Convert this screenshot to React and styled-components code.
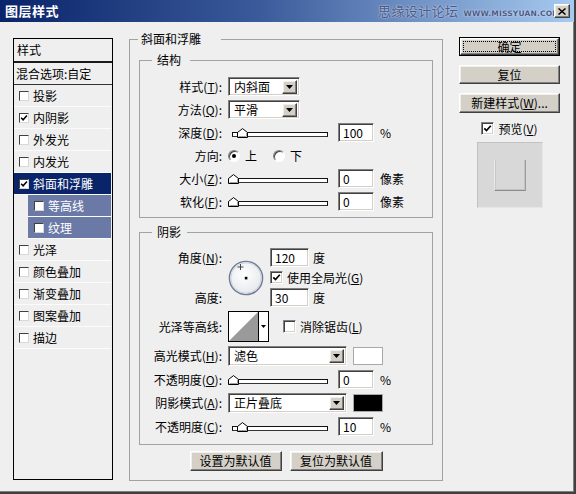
import React from 'react';
import styled, { createGlobalStyle } from 'styled-components';

const GlobalStyle = createGlobalStyle`
  html, body {
    margin: 0;
    padding: 0;
    background: #efefef;
  }
  body {
    font-family: "Noto Sans CJK SC", "Noto Sans", sans-serif;
    font-size: 12px;
    color: #000;
  }
  u {
    text-decoration: underline;
    text-underline-offset: 1px;
  }
`;

const sunken = `
  border: 1px solid;
  border-color: #808080 #ffffff #ffffff #808080;
  box-shadow: inset 1px 1px #404040, inset -1px -1px #d4d0c8;
`;

const raised = `
  border: 1px solid;
  border-color: #ffffff #404040 #404040 #ffffff;
  box-shadow: inset -1px -1px #808080, inset 1px 1px #f1efe8;
`;

const Window = styled.div`
  position: relative;
  width: 576px;
  height: 494px;
  box-sizing: border-box;
  background: #efefef;
  display: flex;
  flex-direction: column;
  overflow: hidden;
  border-right: 2px solid #404040;
  border-bottom: 2px solid #404040;
  box-shadow: inset -1px -1px #808080;
  line-height: 14px;
`;

const TitleBar = styled.div`
  position: relative;
  height: 22px;
  flex-shrink: 0;
  display: flex;
  align-items: center;
  padding: 0 4px 0 5px;
  background: linear-gradient(to right, #0a246a 0%, #3a5a9a 45%, #a6caf0 100%);
`;

const Title = styled.span`
  color: #fff;
  font-weight: bold;
  font-size: 13px;
  letter-spacing: 0.5px;
`;

const Watermark = styled.div`
  position: absolute;
  right: 14px;
  top: 4px;
  display: flex;
  align-items: baseline;
  gap: 5px;
  color: #4c5a86;
  text-shadow: 0 0 2px #e8eef8;
  pointer-events: none;
`;

const WatermarkCn = styled.span`
  font-size: 13px;
  letter-spacing: 0.4px;
`;

const WatermarkEn = styled.span`
  font-family: "DejaVu Sans", sans-serif;
  font-size: 7.5px;
  font-weight: bold;
  letter-spacing: 0.2px;
`;

const CloseButton = styled.div`
  margin-left: auto;
  width: 16px;
  height: 14px;
  box-sizing: border-box;
  background: #d4d0c8;
  ${raised}
  display: flex;
  align-items: center;
  justify-content: center;
  position: relative;
  z-index: 1;
`;

const Body = styled.div`
  display: flex;
  align-items: flex-start;
  padding: 15px 0 0 13px;
`;

/* ---------- left style list ---------- */

const StyleList = styled.div`
  width: 100px;
  height: 442px;
  margin-top: 1px;
  box-sizing: border-box;
  border: 1px solid #000;
  display: flex;
  flex-direction: column;
  flex-shrink: 0;
`;

const ListHeader = styled.div`
  height: 22px;
  border-bottom: 2px solid #1a1a1a;
  padding-left: 3px;
  display: flex;
  align-items: center;
`;

const ListBlend = styled.div`
  height: 21px;
  border-bottom: 1px solid #333;
  padding-left: 2px;
  display: flex;
  align-items: center;
  white-space: nowrap;
`;

const ListItem = styled.div`
  height: 21px;
  border-bottom: 1px solid #fbfbfb;
  display: flex;
  align-items: center;
  gap: 4px;
  white-space: nowrap;
  margin: ${p => (p.$sub ? '0 1px 0 14px' : '0 1px 0 0')};
  padding-left: ${p => (p.$sub ? '6px' : '5px')};
  background: ${p => (p.$active ? '#0a246a' : p.$sub ? '#6b79a6' : 'transparent')};
  color: ${p => (p.$active || p.$sub ? '#fff' : '#000')};
`;

const ListBox = styled.span`
  width: 10px;
  height: 10px;
  box-sizing: border-box;
  flex-shrink: 0;
  background: #fff;
  border: 1px solid;
  border-color: #404040 #d8d8d8 #d8d8d8 #404040;
  display: flex;
  align-items: center;
  justify-content: center;
`;

/* ---------- middle panel ---------- */

const Group = styled.fieldset`
  margin: ${p => p.$margin || '0'};
  padding: ${p => p.$pad || '0'};
  min-width: 0;
  box-sizing: border-box;
  border: 1px solid #a2a2a2;
  width: ${p => p.$width || 'auto'};
  flex-shrink: 0;
`;

const Legend = styled.legend`
  margin-left: ${p => p.$offset}px;
  padding: 0 ${p => p.$right}px 0 ${p => p.$left}px;
  height: 14px;
  line-height: 14px;
  font-size: 12px;
`;

const Row = styled.div`
  display: flex;
  align-items: center;
  height: ${p => p.$h || 19}px;
  margin-top: ${p => p.$mt ?? 4}px;
  white-space: nowrap;
`;

const Label = styled.span`
  width: 82px;
  margin-right: 6px;
  flex-shrink: 0;
  text-align: right;
  white-space: nowrap;
`;

const SelectBox = styled.div`
  width: ${p => p.$w}px;
  height: ${p => p.$h || 19}px;
  box-sizing: border-box;
  background: #fff;
  ${sunken}
  display: flex;
  align-items: center;
  justify-content: space-between;
  padding: 0 2px 0 5px;
  flex-shrink: 0;
`;

const DropButton = styled.span`
  width: 15px;
  height: 14px;
  box-sizing: border-box;
  background: #d4d0c8;
  ${raised}
  display: flex;
  align-items: center;
  justify-content: center;
`;

const NumberBox = styled.div`
  width: ${p => p.$w || 36}px;
  height: 19px;
  box-sizing: border-box;
  margin-left: ${p => p.$ml ?? 0}px;
  background: #fff;
  ${sunken}
  display: flex;
  align-items: center;
  padding-left: 4px;
  flex-shrink: 0;
`;

const Unit = styled.span`
  margin-left: ${p => p.$ml ?? 6}px;
`;

const SliderWrap = styled.div`
  position: relative;
  width: 100px;
  height: 19px;
  flex-shrink: 0;
  display: flex;
  align-items: center;
`;

const Track = styled.div`
  width: 96px;
  height: 5px;
  margin: 3px 0 0 4px;
  box-sizing: border-box;
  border: 1px solid #111;
  border-bottom-color: #333;
  background: #fff;
`;

const Thumb = styled.svg`
  position: absolute;
  top: 5px;
`;

const Radio = styled.span`
  position: relative;
  width: 12px;
  height: 12px;
  box-sizing: border-box;
  border-radius: 50%;
  background: #fff;
  border: 1px solid;
  border-color: #808080 #ffffff #ffffff #808080;
  box-shadow: inset 1px 1px #404040;
  flex-shrink: 0;
  &::after {
    content: '';
    display: ${p => (p.$checked ? 'block' : 'none')};
    position: absolute;
    left: 3px;
    top: 3px;
    width: 4px;
    height: 4px;
    border-radius: 50%;
    background: #000;
  }
`;

const RadioText = styled.span`
  margin: 0 ${p => p.$mr || 0}px 0 5px;
`;

const CheckBox = styled.span`
  width: 13px;
  height: 13px;
  box-sizing: border-box;
  background: #fff;
  ${sunken}
  display: flex;
  align-items: center;
  justify-content: center;
  flex-shrink: 0;
  margin-left: ${p => p.$ml || 0}px;
`;

const CheckText = styled.span`
  margin-left: 4px;
`;

const AngleGrid = styled.div`
  display: grid;
  grid-template-columns: 88px 42px auto;
  grid-template-rows: 19px 19px 19px;
  row-gap: 1px;
  align-items: center;
  margin-top: 9px;
`;

const GridLabel = styled.span`
  grid-column: 1;
  grid-row: ${p => p.$row};
  text-align: right;
  padding-right: 6px;
  white-space: nowrap;
`;

const Dial = styled.div`
  grid-column: 2;
  grid-row: 1 / 4;
  display: flex;
  align-items: center;
`;

const GridCell = styled.div`
  grid-column: 3;
  grid-row: ${p => p.$row};
  display: flex;
  align-items: center;
  white-space: nowrap;
`;

const Contour = styled.div`
  width: 41px;
  height: 31px;
  box-sizing: border-box;
  border: 1px solid #000;
  background: #fff;
  display: flex;
  flex-shrink: 0;
`;

const ContourArrow = styled.span`
  flex: 1;
  border-left: 1px solid #000;
  display: flex;
  align-items: center;
  justify-content: center;
`;

const Swatch = styled.span`
  width: 30px;
  height: 18px;
  box-sizing: border-box;
  margin-left: 6px;
  border: 1px solid #a8a8a8;
  background: ${p => p.$color};
  flex-shrink: 0;
`;

const ButtonRow = styled.div`
  display: flex;
  justify-content: center;
  gap: 8px;
  margin-top: 6px;
`;

const Button = styled.div`
  width: ${p => p.$w || 101}px;
  height: ${p => p.$h || 19}px;
  box-sizing: border-box;
  background: #d4d0c8;
  ${raised}
  display: flex;
  align-items: center;
  justify-content: center;
  white-space: nowrap;
  margin-top: ${p => p.$mt || 0}px;
`;

const DefaultButton = styled.div`
  width: 101px;
  height: 19px;
  box-sizing: border-box;
  border: 1px solid #000;
  display: flex;
`;

const DefaultInner = styled.div`
  flex: 1;
  background: #d4d0c8;
  ${raised}
  display: flex;
  align-items: center;
  justify-content: center;
  padding: 2px;
`;

const Focus = styled.div`
  flex: 1;
  align-self: stretch;
  border: 1px dotted #000;
  display: flex;
  align-items: center;
  justify-content: center;
`;

/* ---------- right column ---------- */

const RightColumn = styled.div`
  width: 101px;
  margin-left: 16px;
  display: flex;
  flex-direction: column;
  align-items: center;
  flex-shrink: 0;
`;

const PreviewToggle = styled.div`
  display: flex;
  align-items: center;
  margin-top: 8px;
  height: 15px;
`;

const PreviewBox = styled.div`
  width: 66px;
  height: 66px;
  margin-top: 6px;
  box-sizing: border-box;
  background: #d8d8d8;
  border: 1px solid;
  border-color: #c2c2c2 #e6e6e6 #e6e6e6 #c2c2c2;
  display: flex;
  justify-content: center;
  padding-top: 17px;
`;

const PreviewSquare = styled.div`
  width: 32px;
  height: 31px;
  box-sizing: border-box;
  border-left: 1px solid #e9e9e9;
  border-right: 1px solid #9c9c9c;
  border-bottom: 1px solid #8c8c8c;
  box-shadow: inset 1px 0 #c8c8c8, inset -1px -1px #c4c4c4;
`;

/* ---------- small drawings ---------- */

const Tick = ({ size = 13 }) => (
  <svg width={size - 4} height={size - 4} viewBox="0 0 9 9">
    <path d="M1.3 4.3 L3.5 6.6 L7.8 1.8" fill="none" stroke="#000" strokeWidth="1.7" />
  </svg>
);

const DownTriangle = ({ w = 7, h = 4 }) => (
  <svg width={w} height={h} viewBox={`0 0 ${w} ${h}`}>
    <path d={`M0 0 H${w} L${w / 2} ${h} Z`} fill="#000" />
  </svg>
);

const Select = ({ w, h, children }) => (
  <SelectBox $w={w} $h={h}>
    <span>{children}</span>
    <DropButton>
      <DownTriangle />
    </DropButton>
  </SelectBox>
);

const Slider = ({ pct }) => (
  <SliderWrap>
    <Track />
    <Thumb width="11" height="10" viewBox="0 0 11 10" style={{ left: Math.round(pct * 92) }}>
      <path d="M0.5 9.5 V4.5 L5.5 0.6 L10.5 4.5 V9.5 Z" fill="#fff" stroke="#000" />
      <path d="M1.5 8.5 H9.5 V5" fill="none" stroke="#a0a0a0" />
    </Thumb>
  </SliderWrap>
);

const Check = ({ checked, ml, children }) => (
  <>
    <CheckBox $ml={ml}>{checked && <Tick />}</CheckBox>
    <CheckText>{children}</CheckText>
  </>
);

const AngleDial = () => (
  <svg width="36" height="36" viewBox="0 0 36 36">
    <defs>
      <radialGradient id="dialFill" cx="45%" cy="40%" r="60%">
        <stop offset="0" stopColor="#ffffff" />
        <stop offset="1" stopColor="#e6e8ec" />
      </radialGradient>
    </defs>
    <circle cx="18" cy="18" r="16.6" fill="url(#dialFill)" stroke="#6e7c96" strokeWidth="1.4" />
    <circle cx="18" cy="18" r="15.2" fill="none" stroke="#c7cedb" strokeWidth="0.8" />
    <path d="M12.5 4 V10 M9.5 7 H15.5" stroke="#444" strokeWidth="1" />
    <rect x="16.8" y="16.8" width="2.6" height="2.6" fill="#000" />
  </svg>
);

const listItems = [
  { label: '投影' },
  { label: '内阴影', checked: true },
  { label: '外发光' },
  { label: '内发光' },
  { label: '斜面和浮雕', checked: true, active: true },
  { label: '等高线', sub: true },
  { label: '纹理', sub: true },
  { label: '光泽' },
  { label: '颜色叠加' },
  { label: '渐变叠加' },
  { label: '图案叠加' },
  { label: '描边' },
];

export default function App() {
  return (
    <>
      <GlobalStyle />
      <Window>
        <TitleBar>
          <Title>图层样式</Title>
          <Watermark>
            <WatermarkCn>思缘设计论坛</WatermarkCn>
            <WatermarkEn>WWW.MISSYUAN.COM</WatermarkEn>
          </Watermark>
          <CloseButton>
            <svg width="8" height="7" viewBox="0 0 8 7">
              <path d="M0.5 0.5 L7.5 6.5 M7.5 0.5 L0.5 6.5" stroke="#000" strokeWidth="1.5" />
            </svg>
          </CloseButton>
        </TitleBar>

        <Body>
          <StyleList>
            <ListHeader>样式</ListHeader>
            <ListBlend>混合选项:自定</ListBlend>
            {listItems.map(item => (
              <ListItem key={item.label} $active={item.active} $sub={item.sub}>
                <ListBox>{item.checked && <Tick size={12} />}</ListBox>
                {item.label}
              </ListItem>
            ))}
          </StyleList>

          <Group $width="314px" $margin="-5px 0 0 16px" $pad="0 9px 9px">
            <Legend $offset={-1} $left={3} $right={20}>斜面和浮雕</Legend>

            <Group $margin="7px 0 0" $pad="10px 0 6px">
              <Legend $offset={12} $left={5} $right={9}>结构</Legend>
              <Row $mt={0}>
                <Label>样式(<u>T</u>):</Label>
                <Select w={72}>内斜面</Select>
              </Row>
              <Row>
                <Label>方法(<u>Q</u>):</Label>
                <Select w={72}>平滑</Select>
              </Row>
              <Row>
                <Label>深度(<u>D</u>):</Label>
                <Slider pct={0.1} />
                <NumberBox $ml={10}>100</NumberBox>
                <Unit>%</Unit>
              </Row>
              <Row>
                <Label>方向:</Label>
                <Radio $checked />
                <RadioText $mr={16}>上</RadioText>
                <Radio />
                <RadioText>下</RadioText>
              </Row>
              <Row>
                <Label>大小(<u>Z</u>):</Label>
                <Slider pct={0} />
                <NumberBox $ml={10}>0</NumberBox>
                <Unit>像素</Unit>
              </Row>
              <Row>
                <Label>软化(<u>F</u>):</Label>
                <Slider pct={0} />
                <NumberBox $ml={10}>0</NumberBox>
                <Unit>像素</Unit>
              </Row>
            </Group>

            <Group $margin="7px 0 0" $pad="0 0 8px">
              <Legend $offset={12} $left={5} $right={6}>阴影</Legend>
              <AngleGrid>
                <GridLabel $row={1}>角度(<u>N</u>):</GridLabel>
                <Dial>
                  <AngleDial />
                </Dial>
                <GridCell $row={1}>
                  <NumberBox $w={39}>120</NumberBox>
                  <Unit $ml={4}>度</Unit>
                </GridCell>
                <GridCell $row={2}>
                  <Check checked>使用全局光(<u>G</u>)</Check>
                </GridCell>
                <GridLabel $row={3}>高度:</GridLabel>
                <GridCell $row={3}>
                  <NumberBox $w={39}>30</NumberBox>
                  <Unit $ml={4}>度</Unit>
                </GridCell>
              </AngleGrid>
              <Row $h={31}>
                <Label>光泽等高线:</Label>
                <Contour>
                  <svg width="29" height="29" viewBox="0 0 29 29">
                    <path d="M0 29 L29 0 V29 Z" fill="#9a9a9a" />
                  </svg>
                  <ContourArrow>
                    <DownTriangle w={5} h={3} />
                  </ContourArrow>
                </Contour>
                <Check ml={14}>消除锯齿(<u>L</u>)</Check>
              </Row>
              <Row $h={20}>
                <Label>高光模式(<u>H</u>):</Label>
                <Select w={119} h={20}>滤色</Select>
                <Swatch $color="#ffffff" />
              </Row>
              <Row>
                <Label>不透明度(<u>O</u>):</Label>
                <Slider pct={0} />
                <NumberBox $ml={10}>0</NumberBox>
                <Unit>%</Unit>
              </Row>
              <Row $h={20}>
                <Label>阴影模式(<u>A</u>):</Label>
                <Select w={119} h={20}>正片叠底</Select>
                <Swatch $color="#000000" />
              </Row>
              <Row>
                <Label>不透明度(<u>C</u>):</Label>
                <Slider pct={0.1} />
                <NumberBox $ml={10}>10</NumberBox>
                <Unit>%</Unit>
              </Row>
            </Group>

            <ButtonRow>
              <Button $w={92} $h={20}>设置为默认值</Button>
              <Button $w={93} $h={20}>复位为默认值</Button>
            </ButtonRow>
          </Group>

          <RightColumn>
            <DefaultButton>
              <DefaultInner>
                <Focus>确定</Focus>
              </DefaultInner>
            </DefaultButton>
            <Button $mt={9}>复位</Button>
            <Button $mt={9} $h={20}>新建样式(<u>W</u>)...</Button>
            <PreviewToggle>
              <Check checked>预览(<u>V</u>)</Check>
            </PreviewToggle>
            <PreviewBox>
              <PreviewSquare />
            </PreviewBox>
          </RightColumn>
        </Body>
      </Window>
    </>
  );
}
